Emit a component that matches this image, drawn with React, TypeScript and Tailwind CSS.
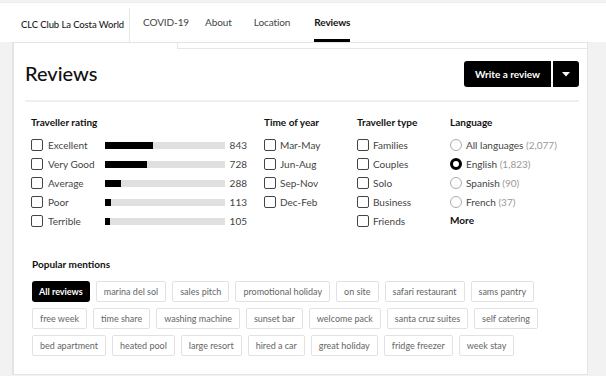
import React from "react";

const ratings = [
  { label: "Excellent", count: 843, fill: 48 },
  { label: "Very Good", count: 728, fill: 42 },
  { label: "Average", count: 288, fill: 16 },
  { label: "Poor", count: 113, fill: 6 },
  { label: "Terrible", count: 105, fill: 5 },
];

const seasons = ["Mar-May", "Jun-Aug", "Sep-Nov", "Dec-Feb"];
const travellers = ["Families", "Couples", "Solo", "Business", "Friends"];
const languages = [
  { label: "All languages", count: "(2,077)", checked: false },
  { label: "English", count: "(1,823)", checked: true },
  { label: "Spanish", count: "(90)", checked: false },
  { label: "French", count: "(37)", checked: false },
];

const mentions = [
  ["All reviews", "marina del sol", "sales pitch", "promotional holiday", "on site", "safari restaurant", "sams pantry"],
  ["free week", "time share", "washing machine", "sunset bar", "welcome pack", "santa cruz suites", "self catering"],
  ["bed apartment", "heated pool", "large resort", "hired a car", "great holiday", "fridge freezer", "week stay"],
];

function Box() {
  return <span className="w-[12px] h-[12px] border border-[#444] rounded-[2px] bg-white shrink-0" />;
}

export default function App() {
  return (
    <div className="w-[606px] h-[376px] bg-[#f2f2f2] overflow-hidden text-[#222]" style={{ fontFamily: "Lato, 'Noto Sans', sans-serif" }}>
      {/* Nav */}
      <div className="h-[40px] bg-white border-t border-[#ececec] mt-[2px] flex items-stretch text-[10px] tracking-[-0.1px]">
        <div className="w-[130px] pl-[21px] flex items-center border-r border-[#e6e6e6] mt-[5px] font-medium text-[9.5px] text-[#222] whitespace-nowrap">
          CLC Club La Costa World
        </div>
        <div className="flex items-center pl-[13px] text-[#444] whitespace-nowrap">
          <span>COVID-19</span>
          <span className="ml-[16px]">About</span>
          <span className="ml-[22px]">Location</span>
          <span className="ml-[24px] relative h-full flex items-center font-bold text-[#111]">
            Reviews
            <span className="absolute left-0 right-0 bottom-0 h-[3px] bg-black" />
          </span>
        </div>
      </div>

      {/* Card */}
      <div className="ml-[12px] w-[576px] h-[333px] bg-white border-l-2 border-r border-b border-[#e4e4e4] border-t">
        <div className="ml-[163px] h-[6px] border-b border-l border-[#e6e6e6]" />

        <div className="pl-[11px] pr-[8px]">
          <div className="flex items-center justify-between pt-[12px] pb-[13px] border-b-2 border-[#efefef]">
            <h1 className="text-[20px] font-medium text-[#111] leading-none -mt-[3px]">Reviews</h1>
            <div className="flex gap-[2px]">
              <button className="h-[26px] w-[87px] bg-black text-white text-[10px] font-bold rounded-l-[3px]">Write a review</button>
              <button className="h-[26px] w-[26px] bg-black rounded-r-[3px] flex items-center justify-center">
                <svg width="8" height="5" viewBox="0 0 8 5"><path d="M0 0h8L4 4.5z" fill="white" /></svg>
              </button>
            </div>
          </div>

          <div className="flex pl-[6px] pt-[13px] text-[10px] text-[#444]">
            {/* Traveller rating */}
            <div className="w-[233px]">
              <div className="font-bold text-[#111] mb-[9px]">Traveller rating</div>
              <div className="flex flex-col gap-[7px]">
                {ratings.map((r) => (
                  <div key={r.label} className="flex items-center h-[12px]">
                    <Box />
                    <span className="ml-[5px] w-[57px]">{r.label}</span>
                    <div className="w-[120px] h-[7px] bg-[#e0e0e0]">
                      <div className="h-full bg-black" style={{ width: r.fill + "px" }} />
                    </div>
                    <span className="w-[22px] text-right">{r.count}</span>
                  </div>
                ))}
              </div>
            </div>

            {/* Time of year */}
            <div className="w-[93px]">
              <div className="font-bold text-[#111] mb-[9px]">Time of year</div>
              <div className="flex flex-col gap-[7px]">
                {seasons.map((s) => (
                  <div key={s} className="flex items-center h-[12px]">
                    <Box />
                    <span className="ml-[4px]">{s}</span>
                  </div>
                ))}
              </div>
            </div>

            {/* Traveller type */}
            <div className="w-[93px]">
              <div className="font-bold text-[#111] mb-[9px]">Traveller type</div>
              <div className="flex flex-col gap-[7px]">
                {travellers.map((s) => (
                  <div key={s} className="flex items-center h-[12px]">
                    <Box />
                    <span className="ml-[4px]">{s}</span>
                  </div>
                ))}
              </div>
            </div>

            {/* Language */}
            <div>
              <div className="font-bold text-[#111] mb-[9px]">Language</div>
              <div className="flex flex-col gap-[7px]">
                {languages.map((l) => (
                  <div key={l.label} className="flex items-center h-[12px]">
                    {l.checked ? (
                      <span className="w-[12px] h-[12px] rounded-full border-[3.5px] border-black shrink-0" />
                    ) : (
                      <span className="w-[12px] h-[12px] rounded-full border border-[#aaa] shrink-0" />
                    )}
                    <span className="ml-[4px]">
                      {l.label} <span className="text-[#999]">{l.count}</span>
                    </span>
                  </div>
                ))}
                <div className="font-bold text-[#111] -mt-[2px]">More</div>
              </div>
            </div>
          </div>

          {/* Popular mentions */}
          <div className="pl-[7px] pt-[29px]">
            <div className="text-[10px] font-bold text-[#111] mb-[9px]">Popular mentions</div>
            <div className="flex flex-col gap-[6px]">
              {mentions.map((row, i) => (
                <div key={i} className="flex gap-[6px]">
                  {row.map((m) =>
                    m === "All reviews" ? (
                      <span key={m} className="h-[21px] px-[7px] flex items-center bg-black text-white text-[9px] font-bold rounded-[3px]">{m}</span>
                    ) : (
                      <span key={m} className="h-[21px] px-[7px] flex items-center border border-[#e2e2e2] text-[#666] text-[9px] rounded-[2px]">{m}</span>
                    )
                  )}
                </div>
              ))}
            </div>
          </div>
        </div>
      </div>
    </div>
  );
}
